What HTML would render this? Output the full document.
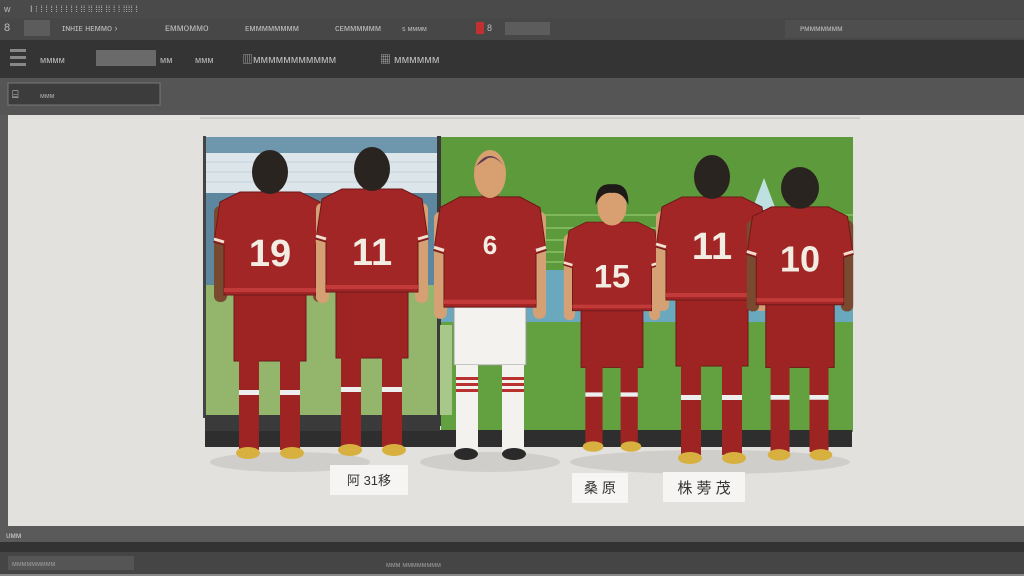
<!DOCTYPE html>
<html><head><meta charset="utf-8"><style>
html,body{margin:0;padding:0;width:1024px;height:576px;overflow:hidden;background:#444;font-family:"Liberation Sans","Noto Sans CJK JP",sans-serif}
</style></head><body>
<svg width="1024" height="576" viewBox="0 0 1024 576" xmlns="http://www.w3.org/2000/svg" font-family="Liberation Sans, Noto Sans CJK JP, sans-serif">
<defs>
<g id="shirt">
  <rect x="-9" y="36" width="18" height="12" fill="#8a5a3a"/>
  <path d="M-30,42 L30,42 L50,52 L56,92 L46,95 L46,145 L-46,145 L-46,95 L-56,92 L-50,52 Z" fill="#a32626" stroke="#6e1818" stroke-width="1"/>
  <path d="M-56,89 L-46,92 M56,89 L46,92" stroke="#f0e0d0" stroke-width="3"/>
  <rect x="-46" y="138" width="92" height="4" fill="#c23a3a"/>
</g>
<g id="body">
  <rect x="-56" y="56" width="13" height="96" rx="6" fill="#7a4a30"/>
  <rect x="43" y="56" width="13" height="96" rx="6" fill="#7a4a30"/>
  <use href="#shirt"/>
</g>
<g id="bodyL">
  <rect x="-56" y="56" width="13" height="100" rx="6" fill="#d4a074"/>
  <rect x="43" y="56" width="13" height="100" rx="6" fill="#d4a074"/>
  <use href="#shirt"/>
</g>
<g id="legsR">
  <rect x="-36" y="145" width="72" height="66" fill="#9e2424" stroke="#6e1818"/>
  <rect x="-31" y="210" width="20" height="90" fill="#9e2424"/>
  <rect x="10" y="210" width="20" height="90" fill="#9e2424"/>
  <rect x="-31" y="240" width="20" height="5" fill="#eee"/>
  <rect x="10" y="240" width="20" height="5" fill="#eee"/>
  <ellipse cx="-22" cy="303" rx="12" ry="6" fill="#d8b040"/>
  <ellipse cx="22" cy="303" rx="12" ry="6" fill="#d8b040"/>
</g>
</defs>

<rect x="0" y="0" width="1024" height="18" fill="#4a4a4a"/>
<rect x="0" y="18" width="1024" height="22" fill="#474747"/>
<g fill="#bbb" font-size="9">
<text x="4" y="12">w</text><text x="30" y="12">I  ⁝ ⁞ ⁞  ⁞ ⁞ ⁞ ⁞  ⁞ ⁞   ⁞⁞   ⁞⁞ ⁞⁞⁞ ⁞⁞ ⁞ ⁞ ⁞⁞⁞⁞ ⁞</text>
<text x="4" y="31" font-size="11">8</text>
<rect x="24" y="20" width="26" height="16" fill="#5c5c5c"/>
<text x="62" y="31">ɪɴʜɪᴇ  ʜᴇᴍᴍᴏ ›</text>
<text x="165" y="31" font-size="10">ᴇᴍᴍᴏᴍᴍᴏ</text>
<text x="245" y="31">ᴇᴍᴍᴍᴍᴍᴍᴍᴍ</text>
<text x="335" y="31">ᴄᴇᴍᴍᴍᴍᴍᴍ</text>
<text x="402" y="31" font-size="7">ꜱ ᴍᴍᴍᴍ</text>
<rect x="476" y="22" width="8" height="12" fill="#c03030"/>
<text x="487" y="31">8</text>
<rect x="505" y="22" width="45" height="13" fill="#5c5c5c"/>
<rect x="785" y="20" width="239" height="18" fill="#4e4e4e"/>
<text x="800" y="31" font-size="8">ᴘᴍᴍᴍᴍᴍᴍᴍ</text>
</g>
<rect x="0" y="40" width="1024" height="38" fill="#343434"/>
<g fill="#bbb" font-size="9">
<rect x="10" y="49" width="16" height="3" fill="#888"/><rect x="10" y="56" width="16" height="3" fill="#888"/><rect x="10" y="63" width="16" height="3" fill="#888"/>
<text x="40" y="63">ᴍᴍᴍᴍ</text>
<rect x="96" y="50" width="60" height="16" fill="#6a6a6a"/>
<text x="160" y="63">ᴍᴍ</text><text x="195" y="63">ᴍᴍᴍ</text>
<text x="242" y="63" font-size="11">▥ᴍᴍᴍᴍᴍᴍᴍᴍᴍᴍᴍ</text>
<text x="380" y="63" font-size="11">▦ ᴍᴍᴍᴍᴍᴍ</text>
</g>
<rect x="0" y="78" width="1024" height="37" fill="#555"/>
<rect x="8" y="83" width="152" height="22" fill="#3c3c3c" stroke="#777"/>
<text x="12" y="98" fill="#ddd" font-size="11">⌸</text><text x="40" y="98" fill="#aaa" font-size="7">ᴍᴍᴍ</text>

<rect x="8" y="115" width="1016" height="411" fill="#e3e1de"/>
<rect x="0" y="115" width="8" height="411" fill="#5a5a5a"/>
<rect x="200" y="117" width="660" height="2" fill="#cfcdca"/>

<rect x="205" y="137" width="235" height="280" fill="#8aac64"/>
<rect x="205" y="137" width="235" height="16" fill="#6e97ae"/>
<rect x="205" y="153" width="235" height="40" fill="#dce5ea"/>
<g stroke="#c5d2da" stroke-width="1"><line x1="205" y1="162" x2="440" y2="162"/><line x1="205" y1="172" x2="440" y2="172"/><line x1="205" y1="182" x2="440" y2="182"/></g>
<rect x="205" y="193" width="235" height="92" fill="#5c879e"/>
<rect x="205" y="285" width="235" height="132" fill="#93b56c"/>
<rect x="203" y="136" width="3" height="282" fill="#444"/>
<rect x="437" y="136" width="4" height="290" fill="#3a3a3a"/>
<rect x="441" y="137" width="412" height="295" fill="#5d9a3c"/>
<g stroke="#7fb85a" stroke-width="2"><line x1="530" y1="215" x2="853" y2="215"/><line x1="530" y1="228" x2="853" y2="228"/><line x1="530" y1="240" x2="853" y2="240"/><line x1="530" y1="252" x2="853" y2="252"/><line x1="530" y1="262" x2="853" y2="262"/></g>
<rect x="441" y="270" width="412" height="52" fill="#6aa8bd"/>
<rect x="441" y="322" width="412" height="110" fill="#62a040"/>
<path d="M752,210 L764,178 L776,210 Z" fill="#bfe0e0"/>
<rect x="440" y="325" width="12" height="90" fill="#a8c88a"/>
<rect x="205" y="430" width="647" height="17" fill="#2e2e2e"/>
<rect x="205" y="415" width="235" height="16" fill="#3a3a3a"/>

<ellipse cx="290" cy="462" rx="80" ry="10" fill="#d0ceca"/>
<ellipse cx="490" cy="462" rx="70" ry="10" fill="#d0ceca"/>
<ellipse cx="710" cy="462" rx="140" ry="12" fill="#d0ceca"/>

<g transform="translate(270,150)">
<use href="#legsR"/><use href="#body"/>
<ellipse cx="0" cy="22" rx="18" ry="22" fill="#2a2420"/>
<text x="0" y="116" text-anchor="middle" fill="#f3ece2" font-size="38" font-weight="bold">19</text>
</g>
<g transform="translate(372,147)">
<use href="#legsR"/><use href="#bodyL"/>
<ellipse cx="0" cy="22" rx="18" ry="22" fill="#2a2420"/>
<text x="0" y="118" text-anchor="middle" fill="#f3ece2" font-size="38" font-weight="bold">11</text>
</g>
<g transform="translate(490,152)">
<rect x="-36" y="153" width="72" height="60" fill="#f4f2ee" stroke="#999"/>
<rect x="-34" y="213" width="22" height="88" fill="#f4f2ee"/>
<rect x="12" y="213" width="22" height="88" fill="#f4f2ee"/>
<g fill="#b83030"><rect x="-34" y="225" width="22" height="3"/><rect x="-34" y="231" width="22" height="3"/><rect x="-34" y="237" width="22" height="3"/><rect x="12" y="225" width="22" height="3"/><rect x="12" y="231" width="22" height="3"/><rect x="12" y="237" width="22" height="3"/></g>
<ellipse cx="-24" cy="302" rx="12" ry="6" fill="#2a2a2a"/><ellipse cx="24" cy="302" rx="12" ry="6" fill="#2a2a2a"/>
<g transform="scale(1,1.07)"><use href="#bodyL"/></g>
<ellipse cx="0" cy="22" rx="16" ry="24" fill="#d8a070"/>
<path d="M-14,14 Q0,-6 14,14 Q6,4 -2,6 Z" fill="#5a3a50"/>
<text x="0" y="102" text-anchor="middle" fill="#f3ece2" font-size="26" font-weight="bold">6</text>
</g>
<g transform="translate(612,186) scale(0.86)">
<use href="#legsR"/><use href="#bodyL"/>
<ellipse cx="0" cy="24" rx="17" ry="22" fill="#d8a070"/>
<path d="M-19,22 Q-20,-4 0,-2 Q20,-4 19,22 Q12,6 0,8 Q-12,6 -19,22 Z" fill="#1e1a18"/>
<text x="0" y="118" text-anchor="middle" fill="#f3ece2" font-size="38" font-weight="bold">15</text>
</g>
<g transform="translate(712,155)">
<use href="#legsR"/><use href="#bodyL"/>
<ellipse cx="0" cy="22" rx="18" ry="22" fill="#2a2420"/>
<text x="0" y="104" text-anchor="middle" fill="#f3ece2" font-size="38" font-weight="bold">11</text>
</g>
<g transform="translate(800,167) scale(0.95)">
<use href="#legsR"/><use href="#body"/>
<ellipse cx="0" cy="22" rx="20" ry="22" fill="#2a2420"/>
<text x="0" y="110" text-anchor="middle" fill="#f3ece2" font-size="38" font-weight="bold">10</text>
</g>

<rect x="330" y="465" width="78" height="30" fill="#f6f5f3"/>
<text x="369" y="485" text-anchor="middle" font-size="13" fill="#333">阿 31移</text>
<rect x="572" y="473" width="56" height="30" fill="#f6f5f3"/>
<text x="600" y="493" text-anchor="middle" font-size="14" fill="#333">桑 原</text>
<rect x="663" y="472" width="82" height="30" fill="#f6f5f3"/>
<text x="704" y="493" text-anchor="middle" font-size="15" fill="#333">株 蒡 茂</text>

<rect x="0" y="526" width="1024" height="16" fill="#5a5a5a"/>
<text x="6" y="538" fill="#ccc" font-size="8">ᴜᴍᴍ</text>
<rect x="0" y="542" width="1024" height="10" fill="#333"/>
<rect x="0" y="552" width="1024" height="22" fill="#454545"/>
<rect x="8" y="556" width="126" height="14" fill="#555"/>
<text x="12" y="566" fill="#999" font-size="7">ᴍᴍᴍᴍᴍᴍᴍᴍᴍ</text>
<text x="386" y="567" fill="#999" font-size="7">ᴍᴍᴍ   ᴍᴍᴍᴍᴍᴍᴍᴍ</text>
<rect x="0" y="574" width="1024" height="2" fill="#888"/>
</svg>
</body></html>
